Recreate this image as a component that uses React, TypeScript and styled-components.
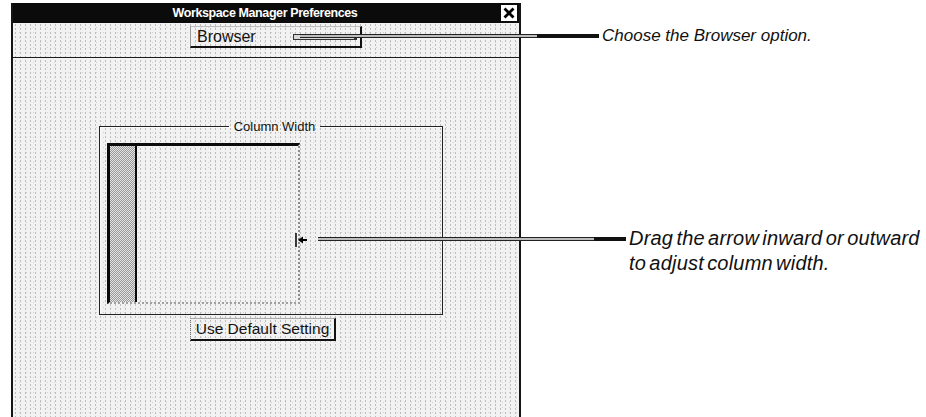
import styled, { createGlobalStyle } from "styled-components";

const GlobalStyle = createGlobalStyle`
  html, body {
    margin: 0;
    padding: 0;
    background: #fff;
    overflow: hidden;
  }
  body {
    font-family: "Liberation Sans", Arial, sans-serif;
  }
`;

// scanned-paper grey with a little grain
const grain = `
  background-color: #f2f2f2;
  background-image:
    radial-gradient(circle, #bdbdbd 0.55px, transparent 0.8px),
    radial-gradient(circle, #d0d0d0 0.55px, transparent 0.8px);
  background-size: 5px 4px, 7px 5px;
  background-position: 0 0, 3px 2px;
`;

const App = () => {
  return (
    <>
      <GlobalStyle />
      <Page>
        <Window>
          <TitleBar>
            <span />
            <Title>Workspace Manager Preferences</Title>
            <CloseBox>
              <svg width="14" height="14" viewBox="0 0 14 14">
                <rect x="0" y="0" width="14" height="14" fill="#fff" />
                <path d="M2.5 2.5 L11.5 11.5 M11.5 2.5 L2.5 11.5" stroke="#000" strokeWidth="2.8" />
              </svg>
            </CloseBox>
          </TitleBar>

          <Toolbar>
            <OptionMenu>
              <OptionLabel>Browser</OptionLabel>
              <OptionMark />
            </OptionMenu>
          </Toolbar>

          <Content>
            <GroupBox>
              <Legend>Column Width</Legend>
              <ListArea>
                <KeyColumn />
                <Handle>
                  <svg width="14" height="16" viewBox="0 0 14 16">
                    <path d="M1 1 V15" stroke="#000" strokeWidth="1.5" />
                    <path d="M3 8 L8 4.5 V7 H12 V9 H8 V11.5 Z" fill="#000" />
                  </svg>
                </Handle>
              </ListArea>
            </GroupBox>
            <PushButton type="button">Use Default Setting</PushButton>
          </Content>
        </Window>

        <Callout $top={36} $left={300}>
          <Leader $lead={237} $bar={62} />
          <CalloutText $size={17}>Choose the Browser option.</CalloutText>
        </Callout>

        <Callout $top={239} $left={318}>
          <Leader $lead={276} $bar={32} />
          <CalloutText $size={20} $wordGap={-2.5} $track={0.2}>
            Drag the arrow inward or outward
            <br />
            to adjust column width.
          </CalloutText>
        </Callout>
      </Page>
    </>
  );
};

const Page = styled.div`
  position: relative;
  width: 926px;
  height: 417px;
  padding: 3px 0 0 11px;
  box-sizing: border-box;
  overflow: hidden;
`;

const Window = styled.div`
  width: 510px;
  height: 430px;
  box-sizing: border-box;
  border-left: 2px solid #151515;
  border-right: 2px solid #151515;
  display: flex;
  flex-direction: column;
  ${grain}
`;

const TitleBar = styled.div`
  height: 20px;
  background: #0b0b0b;
  display: grid;
  grid-template-columns: 1fr auto 1fr;
  align-items: center;
  padding: 0 2px 0 0;
`;

const Title = styled.div`
  color: #fff;
  font-weight: 700;
  font-size: 12.5px;
  letter-spacing: -0.4px;
`;

const CloseBox = styled.div`
  justify-self: end;
  display: flex;
  border: 1px solid #fff;
`;

const Toolbar = styled.div`
  height: 31px;
  border-bottom: 1px solid #1c1c1c;
  display: flex;
  align-items: flex-start;
  padding: 3px 0 0 177px;
`;

const OptionMenu = styled.div`
  width: 172px;
  height: 22px;
  box-sizing: border-box;
  border-top: 1px solid #bdbdbd;
  border-left: 1px solid #9a9a9a;
  border-bottom: 2px solid #111;
  border-right: 2px solid #111;
  display: flex;
  align-items: center;
  padding: 0 3px 0 6px;
`;

const OptionLabel = styled.span`
  font-size: 16px;
  color: #111;
`;

const OptionMark = styled.span`
  margin-left: auto;
  width: 60px;
  height: 4px;
  border: 1px solid #333;
  border-right-width: 3px;
  background: #d8d8d8;
`;

const Content = styled.div`
  display: flex;
  flex-direction: column;
  align-items: center;
  width: 344px;
  margin: 61px 0 0 86px;
  gap: 3px;
`;

const GroupBox = styled.fieldset`
  width: 344px;
  height: 196px;
  box-sizing: border-box;
  margin: 0;
  padding: 9px 0 0 7px;
  border: 1px solid #222;
  box-shadow: inset 1px 1px 0 #fafafa;
`;

const Legend = styled.legend`
  margin: 0 auto;
  padding: 0 5px;
  font-size: 13px;
  color: #111;
`;

const ListArea = styled.div`
  position: relative;
  width: 193px;
  height: 161px;
  box-sizing: border-box;
  border-top: 3px solid #0a0a0a;
  border-left: 3px solid #0a0a0a;
  border-right: 2px dotted #8a8a8a;
  border-bottom: 2px dotted #a0a0a0;
  display: flex;
`;

// dithered grey, like a 50% halftone
const KeyColumn = styled.div`
  width: 25px;
  border-right: 2px solid #0a0a0a;
  background: repeating-conic-gradient(#9a9a9a 0 25%, #e2e2e2 0 50%) 0 0 / 2px 2px;
`;

const Handle = styled.div`
  position: absolute;
  right: -11px;
  top: 86px;
  display: flex;
`;

const PushButton = styled.button`
  height: 23px;
  padding: 0 5px;
  margin-left: -16px;
  font-family: "Liberation Sans", Arial, sans-serif;
  font-size: 15.5px;
  color: #111;
  background: transparent;
  border-top: 1px solid #aaa;
  border-left: 1px dotted #777;
  border-bottom: 2px solid #111;
  border-right: 2px solid #111;
`;

const Callout = styled.div<{ $top: number; $left: number }>`
  position: absolute;
  top: ${(p) => p.$top - 10}px;
  left: ${(p) => p.$left}px;
  display: flex;
  align-items: flex-start;
  gap: 3px;
`;

const Leader = styled.div<{ $lead: number; $bar: number }>`
  margin-top: 8px;
  width: ${(p) => p.$lead + p.$bar}px;
  height: 4px;
  background:
    linear-gradient(#111, #111) right / ${(p) => p.$bar}px 4px no-repeat,
    linear-gradient(#222 0 1px, #bdbdbd 1px 3px, #222 3px 4px) left / ${(p) => p.$lead}px 4px no-repeat;
`;

const CalloutText = styled.div<{ $size: number; $wordGap?: number; $track?: number }>`
  font-family: "Liberation Sans", Arial, sans-serif;
  font-style: italic;
  font-size: ${(p) => p.$size}px;
  line-height: 25px;
  word-spacing: ${(p) => p.$wordGap ?? 0}px;
  letter-spacing: ${(p) => p.$track ?? 0}px;
  color: #111;
  margin-top: -3px;
`;

export default App;
